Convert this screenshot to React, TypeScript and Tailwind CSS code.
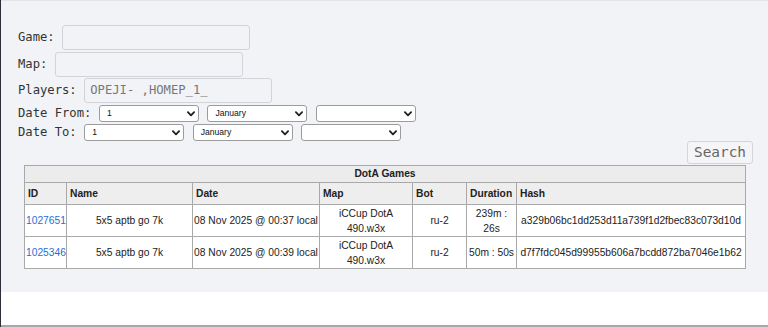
import React from "react";

const mono = { fontFamily: '"DejaVu Sans Mono", "Liberation Mono", monospace' };
const sans = { fontFamily: '"Liberation Sans", Arial, sans-serif' };

function Chevron() {
  return (
    <svg width="8" height="6" viewBox="0 0 8 6" className="shrink-0">
      <path d="M0.9 1.1 L4 4.3 L7.1 1.1" stroke="#1f1f1f" strokeWidth="1.8" fill="none" strokeLinecap="round" strokeLinejoin="round" />
    </svg>
  );
}

function Sel({ value }: { value: string }) {
  return (
    <div
      className="w-[100px] h-[17px] bg-white border border-[#9c9c9c] rounded-[3px] flex items-center justify-between pl-[7px] pr-[3px] text-[8.6px] text-[#111]"
      style={sans}
    >
      <span>{value}</span>
      <Chevron />
    </div>
  );
}

function Field({ label, placeholder }: { label: string; placeholder?: string }) {
  return (
    <div className="flex items-center h-[25px]">
      <span className="text-[12.2px] text-[#333] whitespace-pre" style={mono}>
        {label}
      </span>
      <div
        className="ml-[7.5px] w-[188px] h-[25px] border border-[#d2d3d8] rounded-[3px] flex items-center pl-[5px] text-[12.2px] text-[#777]"
        style={mono}
      >
        {placeholder}
      </div>
    </div>
  );
}

function DateRow({ label }: { label: string }) {
  return (
    <div className="flex items-center h-[17px]">
      <span className="text-[12.2px] text-[#333] whitespace-pre" style={mono}>
        {label}
      </span>
      <div className="ml-[7.5px] flex gap-[8.5px]">
        <Sel value="1" />
        <Sel value="January" />
        <Sel value="" />
      </div>
    </div>
  );
}

const rows = [
  {
    id: "1027651",
    name: "5x5 aptb go 7k",
    date: "08 Nov 2025 @ 00:37 local",
    map: "iCCup DotA 490.w3x",
    bot: "ru-2",
    dur: "239m : 26s",
    hash: "a329b06bc1dd253d11a739f1d2fbec83c073d10d",
  },
  {
    id: "1025346",
    name: "5x5 aptb go 7k",
    date: "08 Nov 2025 @ 00:39 local",
    map: "iCCup DotA 490.w3x",
    bot: "ru-2",
    dur: "50m : 50s",
    hash: "d7f7fdc045d99955b606a7bcdd872ba7046e1b62",
  },
];

export default function App() {
  const th = "border border-[#a9a9a9] text-left font-bold pl-[3px] pr-[1px] align-middle";
  const td = "border border-[#a9a9a9] text-center px-[1px] align-middle leading-[15px] bg-white";
  return (
    <div className="w-[768px] h-[327px] flex flex-col border-l border-[#2e2e38] overflow-hidden">
      <div className="h-[292px] bg-[#f2f3f7] border-t border-[#e2e3e8] pt-[24px] flex flex-col">
        <div className="pl-[17px] flex flex-col">
          <Field label="Game:" />
          <div className="mt-[2px]">
            <Field label="Map:" />
          </div>
          <div className="mt-[1px]">
            <Field label="Players:" placeholder="OPEJI- ,HOMEP_1_" />
          </div>
          <div className="mt-[2px]">
            <DateRow label="Date From:" />
          </div>
          <div className="mt-[2px]">
            <DateRow label="Date To:" />
          </div>
        </div>
        <div className="flex justify-end pr-[15px]">
          <button
            className="w-[66px] h-[23px] bg-[#f5f5f7] border border-[#d4d5da] rounded-[3px] text-[14.4px] text-[#666] flex items-center justify-center"
            style={mono}
          >
            Search
          </button>
        </div>
        <div className="pl-[23px] mt-[1px]">
          <table
            className="table-fixed border-collapse w-[721px] text-[10.25px] text-[#222]"
            style={sans}
          >
            <colgroup>
              <col className="w-[42px]" />
              <col className="w-[126px]" />
              <col className="w-[127px]" />
              <col className="w-[93px]" />
              <col className="w-[54px]" />
              <col className="w-[50px]" />
              <col className="w-[229px]" />
            </colgroup>
            <thead>
              <tr className="h-[17px] bg-[#ececec]">
                <th colSpan={7} className="border border-[#a9a9a9] text-center font-bold leading-[14px]">
                  DotA Games
                </th>
              </tr>
              <tr className="h-[22px] bg-[#eeeeee]">
                <th className={th}>ID</th>
                <th className={th}>Name</th>
                <th className={th}>Date</th>
                <th className={th}>Map</th>
                <th className={th}>Bot</th>
                <th className={th}>Duration</th>
                <th className={th}>Hash</th>
              </tr>
            </thead>
            <tbody>
              {rows.map((r) => (
                <tr key={r.id} className="h-[32px]">
                  <td className={td}>
                    <a className="text-[#1f6fd6]">{r.id}</a>
                  </td>
                  <td className={td}>{r.name}</td>
                  <td className={td + " whitespace-nowrap"}>{r.date}</td>
                  <td className={td}>{r.map}</td>
                  <td className={td}>{r.bot}</td>
                  <td className={td}>{r.dur}</td>
                  <td className={td}>{r.hash}</td>
                </tr>
              ))}
            </tbody>
          </table>
        </div>
      </div>
      <div className="flex-1 bg-white" />
      <div className="h-[2px] bg-[#a7a8ae]" />
    </div>
  );
}
